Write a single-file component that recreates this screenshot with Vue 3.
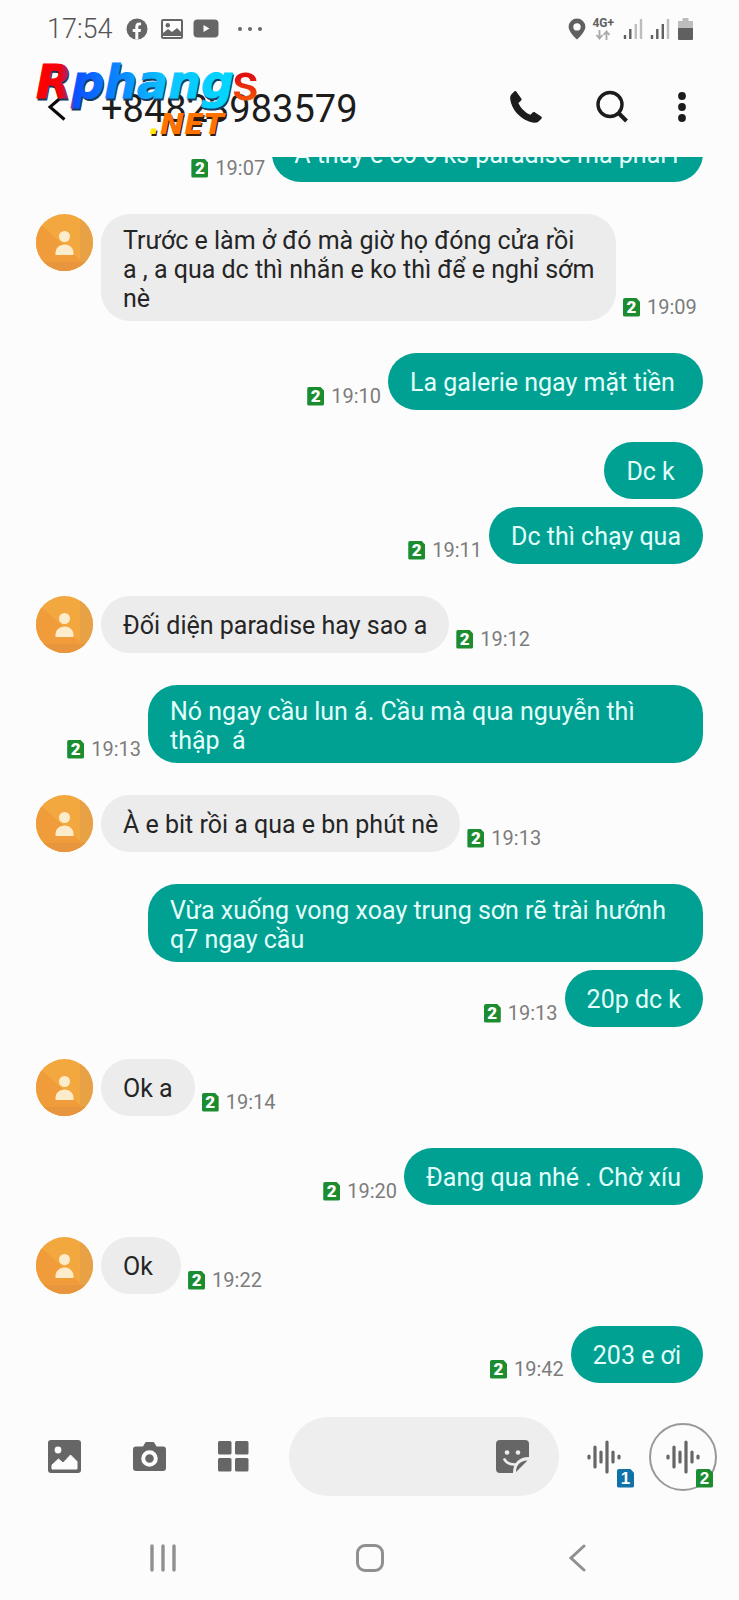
<script setup>
import { ref } from 'vue'

const draft = ref('')

const messages = [
  { side: 'out', text: 'A thấy e có ở ks paradise mà phải r', time: '19:07', clipped: true },
  { side: 'in', text: 'Trước e làm ở đó mà giờ họ đóng cửa rồi a\u00a0, a qua dc thì nhắn e ko thì để e nghỉ sớm nè', time: '19:09', multi: true },
  { side: 'out', text: 'La galerie ngay mặt tiền ', time: '19:10' },
  { side: 'out', text: 'Dc k ' },
  { side: 'out', text: 'Dc thì chạy qua', time: '19:11', grouped: true },
  { side: 'in', text: 'Đối diện paradise hay sao a', time: '19:12' },
  { side: 'out', text: 'Nó ngay cầu lun á. Cầu mà qua nguyễn thì thập  á', time: '19:13', multi: true },
  { side: 'in', text: 'À e bit rồi a qua e bn phút nè', time: '19:13' },
  { side: 'out', text: 'Vừa xuống vong xoay trung sơn rẽ trài hướnh q7 ngay cầu', multi: true },
  { side: 'out', text: '20p dc k', time: '19:13', grouped: true },
  { side: 'in', text: 'Ok a', time: '19:14' },
  { side: 'out', text: 'Đang qua nhé . Chờ xíu', time: '19:20' },
  { side: 'in', text: 'Ok ', time: '19:22' },
  { side: 'out', text: '203 e ơi', time: '19:42' }
]
</script>

<template>
  <div class="screen">
    <div class="status">
      <span class="clock">17:54</span>
      <svg class="fb" width="22" height="22" viewBox="0 0 22 22">
        <circle cx="11" cy="11" r="10.5" fill="#666" />
        <path d="M9.3 21.5v-7.4H6.7v-3h2.6V8.8c0-2.7 1.5-4.2 3.9-4.2.9 0 1.9.2 1.9.2v2.5h-1.2c-1.2 0-1.6.8-1.6 1.5v2.3h2.8l-.5 3h-2.3v7.4z" fill="#fcfcfc" />
      </svg>
      <svg class="pic" width="22" height="20" viewBox="0 0 22 20">
        <rect x="1" y="1" width="20" height="18" rx="1" fill="none" stroke="#666" stroke-width="2" />
        <circle cx="6.8" cy="6.2" r="2.2" fill="#666" />
        <path d="M2 17v-3l5-4 4 3 5-4 4 4v4z" fill="#666" />
      </svg>
      <svg class="yt" width="26" height="19" viewBox="0 0 26 19">
        <rect x="0.5" y="0.5" width="25" height="18" rx="4" fill="#666" />
        <path d="M10.5 6v7l6-3.500z" fill="#fcfcfc" />
      </svg>
      <svg class="more" width="26" height="6" viewBox="0 0 26 6">
        <g fill="#666"><circle cx="3" cy="3" r="2" /><circle cx="13" cy="3" r="2" /><circle cx="23" cy="3" r="2" /></g>
      </svg>
      <svg class="pin" width="18" height="22" viewBox="0 0 18 22">
        <path fill-rule="evenodd" d="M9 .5a8.400 8.400 0 0 0-8.400 8.400C.6 14 9 21.500 9 21.500S17.400 14 17.400 8.900A8.400 8.400 0 0 0 9 .5zm0 4.700a3.700 3.700 0 1 1 0 7.400 3.700 3.700 0 0 1 0-7.400z" fill="#606060" />
      </svg>
      <span class="net">
        <span>4G+</span>
        <svg width="16" height="10" viewBox="0 0 16 10">
          <path d="M4.500 0v8M1.500 5l3 3.500 3-3.500M11.500 10V2M8.500 5l3-3.500 3 3.500" fill="none" stroke="#aaa" stroke-width="1.800" />
        </svg>
      </span>
      <svg class="bars" width="20" height="22" viewBox="0 0 20 22">
        <g stroke-width="2.400"><path d="M2 17v4M7.300 11v10" stroke="#606060" /><path d="M12.800 6v15M18 1v20" stroke="#bdbdbd" /></g>
      </svg>
      <svg class="bars" width="20" height="22" viewBox="0 0 20 22">
        <g stroke-width="2.400"><path d="M2 17v4M7.300 11v10M12.800 6v15" stroke="#606060" /><path d="M18 1v20" stroke="#bdbdbd" /></g>
      </svg>
      <svg class="battery" width="15" height="22" viewBox="0 0 15 22">
        <path d="M4.500 0h6v3H14a1 1 0 0 1 1 1v6H0V4a1 1 0 0 1 1-1h3.500z" fill="#bdbdbd" />
        <path d="M0 10h15v11a1 1 0 0 1-1 1H1a1 1 0 0 1-1-1z" fill="#606060" />
      </svg>
    </div>

    <header class="bar">
      <button class="back" aria-label="Back">
        <svg width="20" height="28" viewBox="0 0 20 28"><path d="M17.500 1.500 3 14l14.500 12.500" fill="none" stroke="#0a0a0a" stroke-width="3" /></svg>
      </button>
      <h1>+84823983579</h1>
      <button class="call" aria-label="Call">
        <svg width="34" height="34" viewBox="0 0 34 34">
          <path d="M7 1.200c-.6-.4-1.300-.3-1.800.3L2.100 4.800C1.200 6 1 7.700 1.300 9.500 2.800 20.500 13 31 25 32.700c1.800.2 3.400-.1 4.600-1.100l2.800-2.900c.7-.7.500-1.600-.3-2.100l-6-4.200c-.9-.6-1.800-.5-2.500.2l-2.100 2.200C16.500 23 11.500 18 9.400 13l2.500-2.200c.8-.7.900-1.500.4-2.300z" fill="#1c1c1c" />
        </svg>
      </button>
      <button class="search" aria-label="Search">
        <svg width="34" height="34" viewBox="0 0 34 34"><circle cx="15" cy="14.500" r="12" fill="none" stroke="#1c1c1c" stroke-width="3.400" /><path d="m23.500 23 8 8" stroke="#1c1c1c" stroke-width="4" /></svg>
      </button>
      <button class="menu" aria-label="More options">
        <svg width="10" height="32" viewBox="0 0 10 32"><g fill="#1c1c1c"><circle cx="5" cy="5" r="3.900" /><circle cx="5" cy="16" r="3.900" /><circle cx="5" cy="27" r="3.900" /></g></svg>
      </button>
      <svg class="logo" width="240" height="90" viewBox="0 0 240 90" aria-label="Rphangs.NET">
        <defs>
          <linearGradient id="word" gradientUnits="userSpaceOnUse" x1="6" y1="0" x2="206" y2="0">
            <stop offset="0" stop-color="#f00" /><stop offset="0.120" stop-color="#f5000c" /><stop offset="0.180" stop-color="#7a3aa0" />
            <stop offset="0.190" stop-color="#0b50ff" /><stop offset="0.450" stop-color="#0a90ff" /><stop offset="0.650" stop-color="#0cc4ff" /><stop offset="1" stop-color="#00d8ff" />
          </linearGradient>
          <linearGradient id="tail" x1="0" y1="0" x2="0" y2="1"><stop offset="0.400" stop-color="#e01010" /><stop offset="1" stop-color="#ff7a00" /></linearGradient>
        </defs>
        <g class="word"><text x="7" y="50" fill="#17395c" stroke="#17395c">Rphang</text><text x="6" y="48" fill="url(#word)" stroke="url(#word)">Rphang</text></g>
        <text class="tail" x="202" y="50" fill="url(#tail)">s</text>
        <g class="net-word"><text x="120" y="86" fill="#3a1c08">.NET</text><text x="119" y="84" fill="#ff7200"><tspan fill="#ffe600">.</tspan>NET</text></g>
      </svg>
    </header>

    <main class="thread">
      <div v-for="(m, i) in messages" :key="i" class="row" :class="[m.side, { clipped: m.clipped, grouped: m.grouped }]">
        <svg v-if="m.side === 'in'" class="avatar" width="57" height="57" viewBox="0 0 57 57">
          <defs><clipPath :id="'face' + i"><circle cx="28.500" cy="28.500" r="28.500" /></clipPath></defs>
          <g :clip-path="`url(#face${i})`">
            <rect width="57" height="57" fill="#f3a83f" />
            <path d="M0 6 44 46v11H0z" fill="#f09c3a" />
            <path d="M44 0h13v57H44z" fill="#e8a144" />
            <path d="M0 48h57v9H0z" fill="#e8963d" />
          </g>
          <circle cx="28.500" cy="22.500" r="5.500" fill="#fdeccb" />
          <path d="M19.500 41v-2c0-5 4-8.500 9-8.500s9 3.500 9 8.500v2z" fill="#fdeccb" />
        </svg>
        <p class="bubble" :class="{ multi: m.multi }">{{ m.text }}</p>
        <div v-if="m.time" class="meta">
          <span class="sim">2</span>
          <time>{{ m.time }}</time>
        </div>
      </div>
    </main>

    <form class="composer" @submit.prevent>
      <button type="button" aria-label="Gallery">
        <svg width="33" height="33" viewBox="0 0 33 33">
          <rect width="33" height="33" rx="3" fill="#666" /><circle cx="10" cy="10" r="3.400" fill="#fcfcfc" />
          <path d="M4 29v-4l6.500-6 4.500 4 7.500-8 6.500 6.500V29z" fill="#fcfcfc" stroke="#fcfcfc" stroke-linejoin="round" />
        </svg>
      </button>
      <button type="button" aria-label="Camera">
        <svg width="33" height="33" viewBox="0 0 33 33">
          <path d="M3 6.500h7L12 3q.5-1 1.500-1h6.500q1 0 1.500 1l2 3.500h6.500a3 3 0 0 1 3 3V28a3 3 0 0 1-3 3H3a3 3 0 0 1-3-3V9.500a3 3 0 0 1 3-3z" fill="#666" />
          <circle cx="16.500" cy="18.500" r="6.300" fill="none" stroke="#fcfcfc" stroke-width="4" />
        </svg>
      </button>
      <button type="button" aria-label="Attachments">
        <svg width="31" height="31" viewBox="0 0 31 31"><g fill="#666"><rect width="13.500" height="13.500" rx="1.500" /><rect x="17" width="13.500" height="13.500" rx="1.500" /><rect y="17" width="13.500" height="13.500" rx="1.500" /><rect x="17" y="17" width="13.500" height="13.500" rx="1.500" /></g></svg>
      </button>
      <div class="field">
        <input v-model="draft" type="text" aria-label="Message" />
        <button type="button" aria-label="Stickers">
          <svg width="33" height="33" viewBox="0 0 33 33">
            <path d="M4 0h25a4 4 0 0 1 4 4v13C23 17 17 23 17 33H4a4 4 0 0 1-4-4V4a4 4 0 0 1 4-4z" fill="#666" />
            <circle cx="11" cy="12.500" r="2.300" fill="#eee" /><circle cx="22" cy="12.500" r="2.300" fill="#eee" />
            <path d="M8 18.500q3 6.500 12 6" fill="none" stroke="#eee" stroke-width="2.600" />
            <path d="M20 32c0-7 4-11 11.500-11.500z" fill="#666" />
          </svg>
        </button>
      </div>
      <button type="button" class="voice" aria-label="Voice message, SIM 1">
        <svg width="34" height="34" viewBox="0 0 34 34"><path d="M2 16v2M8 7v20M14 12v10M20 2v30M26 12v10M32 16v2" stroke="#666" stroke-width="3.200" stroke-linecap="round" /></svg>
        <span class="sim one">1</span>
      </button>
      <button type="button" class="voice ring" aria-label="Voice message, SIM 2">
        <svg width="34" height="34" viewBox="0 0 34 34"><path d="M2 16v2M8 7v20M14 12v10M20 2v30M26 12v10M32 16v2" stroke="#666" stroke-width="3.200" stroke-linecap="round" /></svg>
        <span class="sim">2</span>
      </button>
    </form>

    <nav class="keys">
      <button aria-label="Recent apps"><svg width="28" height="28" viewBox="0 0 28 28"><path d="M3 2v24M14 2v24M25 2v24" stroke="#909090" stroke-width="3.400" stroke-linecap="round" /></svg></button>
      <button aria-label="Home"><svg width="28" height="28" viewBox="0 0 28 28"><rect x="1.500" y="1.500" width="25" height="25" rx="7.500" fill="none" stroke="#909090" stroke-width="3" /></svg></button>
      <button aria-label="Go back"><svg width="28" height="28" viewBox="0 0 28 28"><path d="M21 2 8 14l13 12" fill="none" stroke="#909090" stroke-width="3" stroke-linecap="round" /></svg></button>
    </nav>
  </div>
</template>

<style>
body {
  background: #fcfcfc;
}
</style>

<style scoped>
.screen {
  min-height: 100vh;
  display: flex;
  flex-direction: column;
  background: #fcfcfc;
  font-family: Roboto, "Noto Sans", sans-serif;
  color: #252525;
}
svg {
  display: block;
  flex: none;
}
button {
  border: 0;
  padding: 0;
  background: none;
  flex: none;
}
.status {
  display: flex;
  align-items: center;
  height: 57px;
  padding: 0 46px 0 47px;
}
.clock {
  font-size: 27px;
  line-height: 32px;
  font-weight: 300;
  color: #555;
}
.fb { margin-left: 13px; }
.pic { margin-left: 13px; }
.yt { margin-left: 10px; }
.more { margin-left: 18px; }
.pin { margin-left: auto; }
.net {
  display: flex;
  flex-direction: column;
  align-items: center;
  gap: 1px;
  margin: 0 9px 0 6px;
  font-size: 12px;
  line-height: 12px;
  font-weight: 700;
  color: #606060;
}
.bars { margin-right: 7px; }
.battery { margin-left: 1px; }
.bar {
  position: relative;
  display: flex;
  align-items: center;
  height: 100px;
  padding: 0 52px 0 47px;
}
h1 {
  flex: 1;
  margin: 0 0 0 34px;
  padding-top: 4px;
  font-size: 38px;
  line-height: 44px;
  font-weight: 400;
  color: #1c1c1c;
}
.search { margin-left: 52px; }
.menu { margin-left: 48px; }
.logo {
  position: absolute;
  left: 30px;
  top: -7px;
  pointer-events: none;
}
.word,
.net-word {
  font-family: "DejaVu Sans", sans-serif;
  font-weight: 700;
  font-style: italic;
}
.word { font-size: 46px; }
.net-word { font-size: 29px; }
.tail {
  font-size: 52px;
  font-weight: 500;
}
.thread {
  flex: 1;
  overflow: hidden;
  padding: 0 36px 32px;
}
.row {
  display: flex;
  align-items: flex-end;
  gap: 7px;
  margin-top: 32px;
}
.row.clipped { margin-top: -32px; }
.row.grouped { margin-top: 8px; }
.row.out { flex-direction: row-reverse; }
.avatar {
  align-self: flex-start;
  margin-right: 1px;
}
.bubble {
  box-sizing: border-box;
  max-width: 555px;
  margin: 0;
  padding: 15px 22px 13px;
  border-radius: 29px;
  font-size: 25px;
  line-height: 29px;
  white-space: pre-wrap;
}
.bubble.multi { padding: 12px 14px 8px 22px; }
.in .bubble {
  max-width: 515px;
  background: #ececec;
}
.out .bubble {
  background: #00a192;
  color: #e4fffb;
}
.meta {
  display: flex;
  align-items: center;
  gap: 7px;
  margin-bottom: 2px;
}
time {
  font-size: 20px;
  line-height: 24px;
  color: #7c7c7c;
}
.sim {
  width: 17px;
  height: 19px;
  background: #1b8c30;
  clip-path: polygon(0 0, 76% 0, 100% 22%, 100% 100%, 0 100%);
  border-radius: 2px;
  color: #fff;
  font-size: 17px;
  line-height: 19px;
  font-weight: 900;
  text-align: center;
}
.sim.one { background: #0f72a8; }
.composer {
  display: flex;
  align-items: center;
  gap: 52px;
  padding: 0 22px 0 48px;
}
.field {
  flex: 1;
  min-width: 0;
  display: flex;
  align-items: center;
  height: 79px;
  margin: 0 -24px 0 -12px;
  padding: 0 30px;
  box-sizing: border-box;
  border-radius: 40px;
  background: #eee;
}
.field input {
  flex: 1;
  min-width: 0;
  border: 0;
  outline: 0;
  background: none;
  font: 24px Roboto, sans-serif;
}
.voice {
  position: relative;
}
.voice .sim {
  position: absolute;
  right: -13px;
  bottom: -14px;
}
.ring {
  display: flex;
  align-items: center;
  justify-content: center;
  width: 68px;
  height: 68px;
  margin-left: -24px;
  border: 2px solid #999;
  border-radius: 50%;
}
.ring .sim {
  right: 2px;
  bottom: 1px;
}
.keys {
  display: flex;
  justify-content: space-around;
  align-items: center;
  padding: 48px 59px 28px;
}
</style>
